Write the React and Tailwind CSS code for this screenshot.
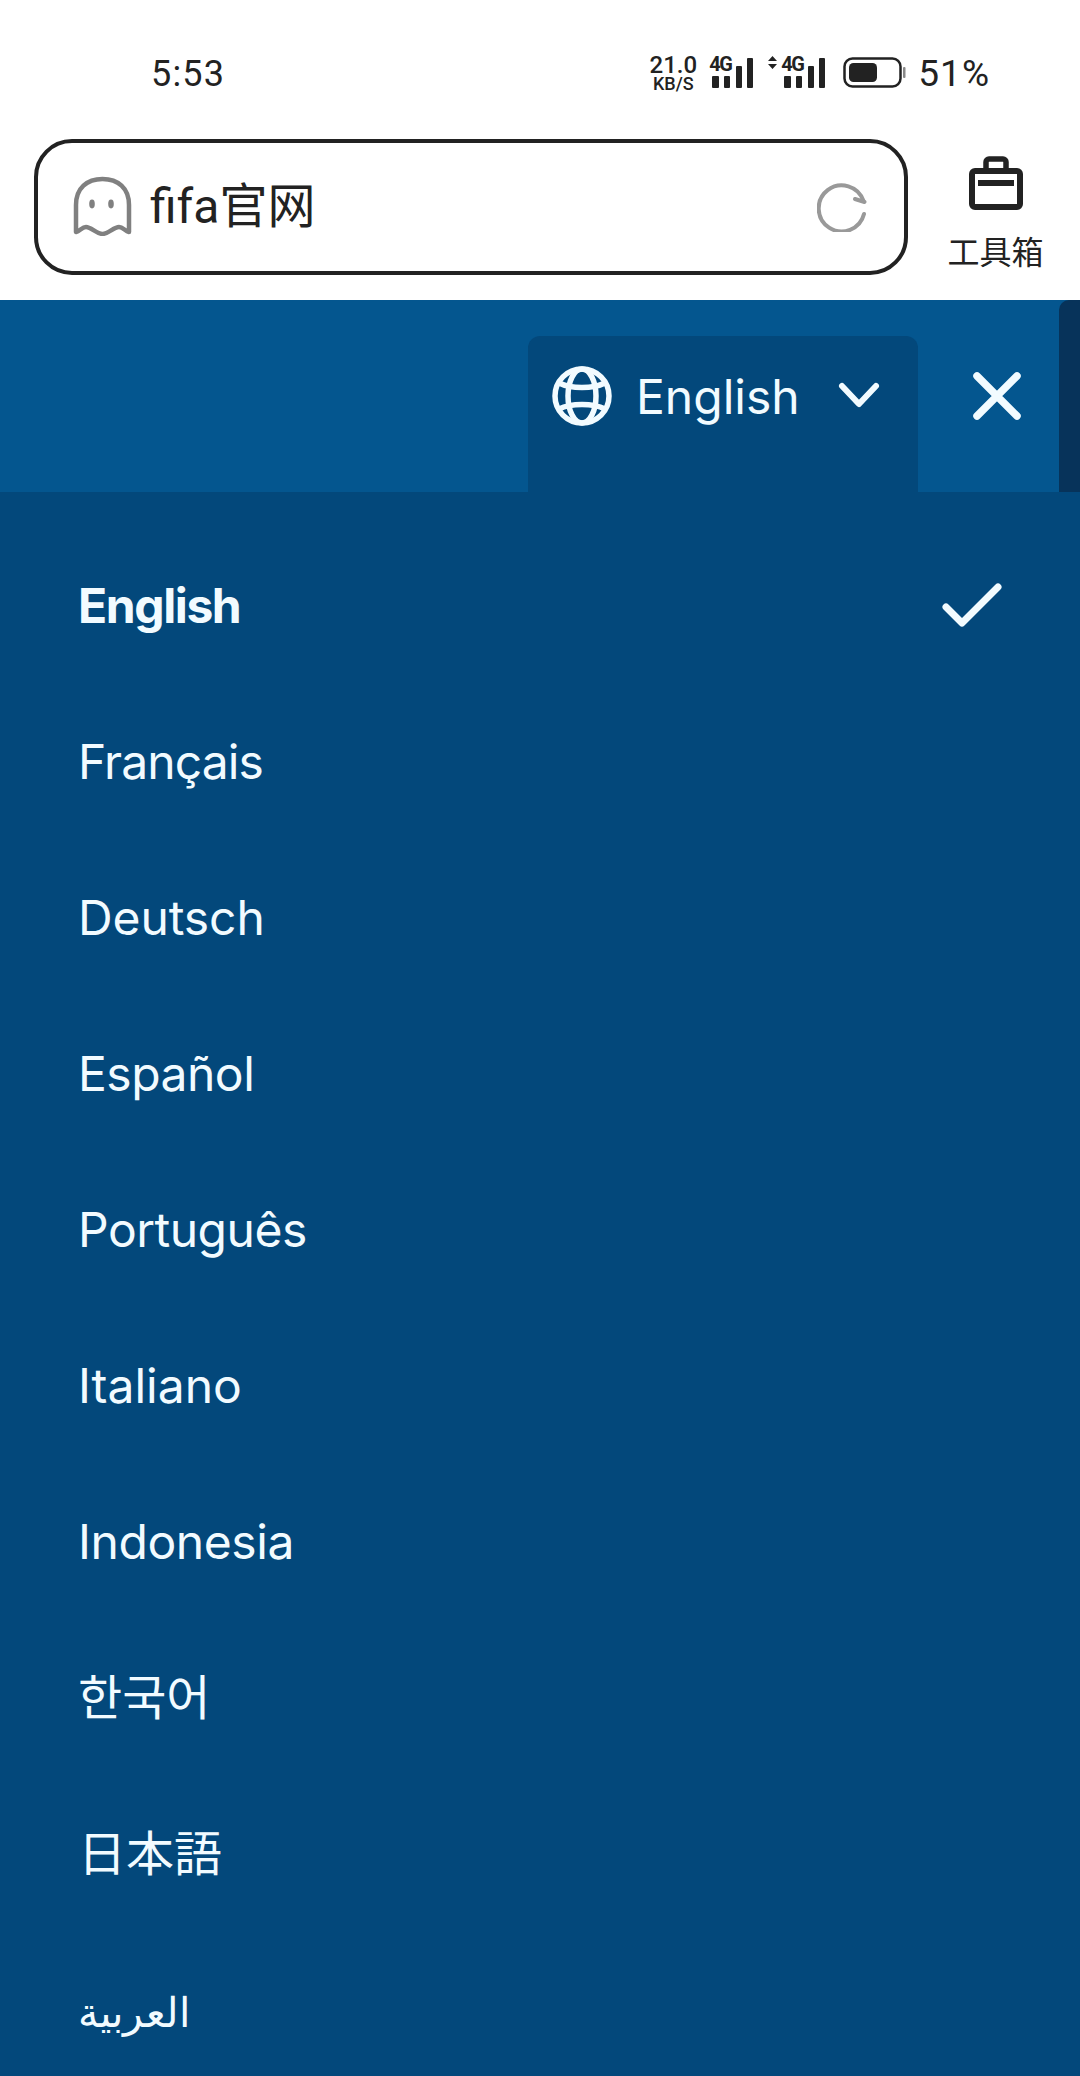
const langs = [
  { label: "Français", cls: "text-[48px] tracking-[-0.9px]" },
  { label: "Deutsch", cls: "text-[48px] tracking-[-0.1px]" },
  { label: "Español", cls: "text-[48px] tracking-[-0.5px]" },
  { label: "Português", cls: "text-[48px] tracking-[-0.5px]" },
  { label: "Italiano", cls: "text-[48px]" },
  { label: "Indonesia", cls: "text-[48px] tracking-[-0.4px]" },
  { label: "한국어", cls: "text-[48px]" },
  { label: "日本語", cls: "text-[48px]" },
  { label: "العربية", cls: "text-[41px] font-light pt-[4px]" },
];

function Signal({ arrows }) {
  return (
    <div className={`relative h-[32px] shrink-0 ${arrows ? "w-[57px]" : "w-[44px]"}`}>
      <svg width={arrows ? 57 : 44} height="32" viewBox={arrows ? "0 0 57 32" : "0 0 44 32"} fill="#222">
        <g transform={arrows ? "translate(13 0)" : ""}>
          <rect x="3" y="20" width="7" height="12" rx="1" />
          <rect x="15" y="20" width="6" height="12" rx="1" />
          <rect x="27" y="10" width="6" height="22" rx="1" />
          <rect x="38" y="2" width="6" height="30" rx="1" />
        </g>
        {arrows && <path d="M0 5l4.5-5 4.5 5zM0 8l4.5 5 4.5-5z" />}
      </svg>
      <span className={`absolute top-[-2px] text-[20px] font-bold leading-[20px] tracking-[-1.5px] ${arrows ? "left-[13px]" : "left-0"}`}>4G</span>
    </div>
  );
}

function Row({ label, cls, active }) {
  return (
    <div className="h-[156px] flex items-center justify-between pl-[78px] pr-[78px]">
      <span className={`leading-none text-[#f2fbff] ${cls} ${active ? "font-bold" : ""}`}>{label}</span>
      {active && (
        <svg width="62" height="46" viewBox="0 0 62 46" fill="none" stroke="#f2fbff" strokeWidth="7" strokeLinecap="round" strokeLinejoin="round" className="-mt-[3px]">
          <path d="M6 25l16 16L58 5" />
        </svg>
      )}
    </div>
  );
}

export default function App() {
  return (
    <div className="w-[1080px] h-[2076px] overflow-hidden bg-white flex flex-col" style={{ fontFamily: "Inter, 'Noto Sans CJK KR', 'Noto Sans', sans-serif" }}>
      <div className="h-[139px] shrink-0 flex items-start justify-between pl-[151px] pr-[90px] pt-[53px] text-[#222]" style={{ fontFamily: "Roboto, sans-serif" }}>
        <span className="text-[36px] leading-[42px] tracking-[1.2px]">5:53</span>
        <div className="flex items-start">
          <div className="flex flex-col items-center font-medium w-[46px] mt-[1px]">
            <span className="text-[24px] leading-[22px]">21.0</span>
            <span className="text-[18px] leading-[15px]">KB/S</span>
          </div>
          <div className="ml-[13px] mt-[3px]">
            <Signal />
          </div>
          <div className="ml-[15px] mt-[3px]">
            <Signal arrows />
          </div>
          <svg width="63" height="32" viewBox="0 0 63 32" className="ml-[18px] mt-[4px] shrink-0">
            <rect x="1.5" y="1.5" width="56" height="28" rx="8" fill="none" stroke="#222" strokeWidth="2.5" />
            <rect x="6" y="6" width="28" height="19" rx="4.5" fill="#222" />
            <rect x="60" y="10" width="2.5" height="11" rx="1" fill="#888" />
          </svg>
          <span className="text-[37px] leading-[42px] tracking-[1px] ml-[12px]">51%</span>
        </div>
      </div>

      <div className="h-[161px] shrink-0 flex items-start pl-[34px]">
        <div className="w-[874px] h-[136px] rounded-[38px] border-[4px] border-[#222] flex items-center pl-[34px] pr-[37px]">
          <svg width="60" height="60" viewBox="0 0 60 60" fill="none" className="shrink-0 -mt-[3px]">
            <path d="M4 56V29C4 12 15 3 30.5 3S57 12 57 29V56C53 55 51 51 47 51C42 51 36 58 30.5 58C25 58 19 51 14 51C10 51 8 55 4 56Z" stroke="#808080" strokeWidth="4.5" strokeLinejoin="round" />
            <ellipse cx="20" cy="28" rx="2.8" ry="4.4" fill="#808080" />
            <ellipse cx="39" cy="28" rx="2.8" ry="4.4" fill="#808080" />
          </svg>
          <span className="ml-[18px] text-[48px] leading-none text-[#222]" style={{ fontFamily: "Roboto, 'Noto Sans CJK SC', sans-serif" }}>fifa官网</span>
          <svg width="50" height="50" viewBox="0 0 50 50" fill="none" stroke="#999" strokeWidth="4" strokeLinecap="round" strokeLinejoin="round" className="ml-auto shrink-0">
            <path d="M47 32A23 23 0 1 1 46.5 19" />
            <path d="M38 17l9.5 3" />
          </svg>
        </div>
        <div className="flex-1 flex flex-col items-center pt-[17px] pl-[3px]">
          <svg width="54" height="54" viewBox="0 0 54 54" fill="none">
            <path d="M17 13V6a3 3 0 0 1 3-3h14a3 3 0 0 1 3 3v7" stroke="#222" strokeWidth="5.5" />
            <rect x="3" y="15" width="48" height="36" rx="3" stroke="#222" strokeWidth="6" />
            <rect x="9" y="24" width="36" height="6" fill="#222" />
          </svg>
          <span className="mt-[20px] text-[32px] leading-[40px] text-[#222]" style={{ fontFamily: "'Noto Sans CJK SC', sans-serif" }}>工具箱</span>
        </div>
      </div>

      <div className="h-[192px] shrink-0 bg-[#04568f] flex items-start relative">
        <div className="ml-[528px] mt-[36px] w-[390px] h-[156px] bg-[#03487b] rounded-t-[12px] flex items-start pl-[24px]">
          <svg width="60" height="60" viewBox="0 0 60 60" fill="none" stroke="#f2fbff" strokeWidth="5.5" className="mt-[30px] shrink-0">
            <circle cx="30" cy="30" r="27" />
            <ellipse cx="30" cy="30" rx="14" ry="27" />
            <path d="M7 17c12 6 34 6 46 0M7 43c12-6 34-6 46 0" />
          </svg>
          <span className="ml-[24px] mt-[36px] text-[48px] leading-[50px] text-[#f2fbff]">English</span>
          <svg width="42" height="30" viewBox="0 0 42 30" fill="none" stroke="#f2fbff" strokeWidth="6" strokeLinecap="round" strokeLinejoin="round" className="ml-[38px] mt-[46px] shrink-0">
            <path d="M4 4l17 18L38 4" />
          </svg>
        </div>
        <svg width="50" height="50" viewBox="0 0 50 50" fill="none" stroke="#f2fbff" strokeWidth="7.5" strokeLinecap="round" className="ml-[54px] mt-[71px] shrink-0">
          <path d="M5 5l40 40M45 5L5 45" />
        </svg>
        <div className="absolute right-0 top-0 bottom-0 w-[21px] bg-[#07335a] rounded-tl-[10px]" />
      </div>

      <div className="flex-1 bg-[#03487b] pt-[36px]">
        <Row label="English" cls="text-[48px] tracking-[-1.4px]" active />
        {langs.map((l) => (
          <Row key={l.label} label={l.label} cls={l.cls} />
        ))}
      </div>
    </div>
  );
}
